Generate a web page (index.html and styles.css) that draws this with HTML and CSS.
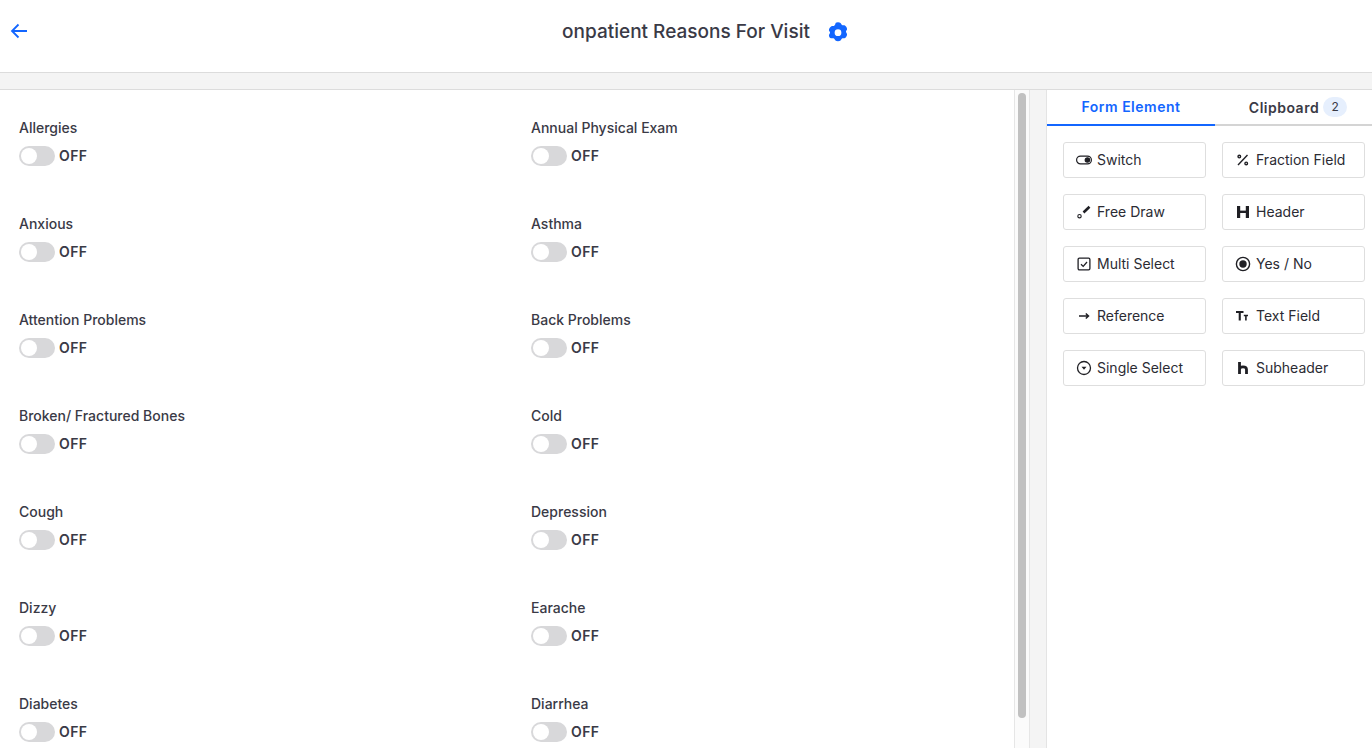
FILE: index.html
```html
<!DOCTYPE html>
<html lang="en">
<head>
    <meta charset="UTF-8">
    <meta name="viewport" content="width=device-width, initial-scale=1.0">
    <title>onpatient Reasons For Visit</title>
    <link rel="stylesheet" href="styles.css">
</head>
<body>
    <header class="topbar">
        <a class="back-link" href="#" aria-label="Back">
            <svg width="18" height="18" viewBox="0 0 18 18" fill="none" stroke="#1366ff" stroke-width="1.8"><path d="M17 9H2M8.500 2.500 2 9l6.500 6.500"/></svg>
        </a>
        <div class="title-wrap">
            <h1>onpatient Reasons For Visit</h1>
            <svg class="gear" width="20" height="21" viewBox="1 0 18 20"><path fill="#1366ff" fill-rule="evenodd" d="M7.600.9c1-.9 3.800-.9 4.800 0 .6.600.7 1.500 1.400 1.900.7.400 1.600.1 2.400.3 1.300.4 2.700 2.800 2.400 4.100-.2.800-1 1.300-1 2.100s.8 1.300 1 2.100c.3 1.300-1.100 3.700-2.400 4.100-.8.200-1.700-.1-2.400.3-.7.400-.8 1.300-1.400 1.900-1 .9-3.800.9-4.800 0-.6-.6-.7-1.500-1.400-1.900-.7-.4-1.600-.1-2.400-.3C2.500 16 1.100 13.600 1.400 12.300c.2-.8 1-1.300 1-2.100s-.8-1.300-1-2.100C1.100 6.800 2.500 4.400 3.800 4c.8-.2 1.700.1 2.400-.3.700-.4.800-1.300 1.400-1.900ZM10 7a3.200 3.200 0 1 0 0 6.400A3.200 3.200 0 0 0 10 7Z"/></svg>
        </div>
    </header>

    <div class="band"></div>

    <main class="workspace">
        <section class="form-panel">
            <div class="field-grid">
                <div class="field"><label>Allergies</label><div class="toggle-row"><span class="toggle"></span><span class="toggle-text">OFF</span></div></div>
                <div class="field"><label>Annual Physical Exam</label><div class="toggle-row"><span class="toggle"></span><span class="toggle-text">OFF</span></div></div>
                <div class="field"><label>Anxious</label><div class="toggle-row"><span class="toggle"></span><span class="toggle-text">OFF</span></div></div>
                <div class="field"><label>Asthma</label><div class="toggle-row"><span class="toggle"></span><span class="toggle-text">OFF</span></div></div>
                <div class="field"><label>Attention Problems</label><div class="toggle-row"><span class="toggle"></span><span class="toggle-text">OFF</span></div></div>
                <div class="field"><label>Back Problems</label><div class="toggle-row"><span class="toggle"></span><span class="toggle-text">OFF</span></div></div>
                <div class="field"><label>Broken/ Fractured Bones</label><div class="toggle-row"><span class="toggle"></span><span class="toggle-text">OFF</span></div></div>
                <div class="field"><label>Cold</label><div class="toggle-row"><span class="toggle"></span><span class="toggle-text">OFF</span></div></div>
                <div class="field"><label>Cough</label><div class="toggle-row"><span class="toggle"></span><span class="toggle-text">OFF</span></div></div>
                <div class="field"><label>Depression</label><div class="toggle-row"><span class="toggle"></span><span class="toggle-text">OFF</span></div></div>
                <div class="field"><label>Dizzy</label><div class="toggle-row"><span class="toggle"></span><span class="toggle-text">OFF</span></div></div>
                <div class="field"><label>Earache</label><div class="toggle-row"><span class="toggle"></span><span class="toggle-text">OFF</span></div></div>
                <div class="field"><label>Diabetes</label><div class="toggle-row"><span class="toggle"></span><span class="toggle-text">OFF</span></div></div>
                <div class="field"><label>Diarrhea</label><div class="toggle-row"><span class="toggle"></span><span class="toggle-text">OFF</span></div></div>
            </div>
        </section>

        <div class="scroll-track"><div class="scroll-thumb"></div></div>
        <div class="gutter"></div>

        <aside class="side-panel">
            <div class="tabs">
                <div class="tab tab-active">Form Element</div>
                <div class="tab">Clipboard <span class="badge">2</span></div>
            </div>
            <div class="element-grid">
                <button class="element"><span class="icon"><svg width="16" height="16" viewBox="0 0 16 16" fill="none" stroke="#1f1f24" stroke-width="1.200"><rect x=".6" y="4.100" width="14.800" height="7.800" rx="3.900"/><circle cx="11.400" cy="8" r="2.200" fill="#1f1f24"/></svg></span>Switch</button>
                <button class="element"><span class="icon"><svg width="16" height="16" viewBox="0 0 16 16" fill="none" stroke="#1f1f24" stroke-width="1.400"><path d="M12.500 3 3 13"/><circle cx="4.300" cy="4.600" r="1.300"/><circle cx="11.200" cy="11.400" r="1.300"/></svg></span>Fraction Field</button>
                <button class="element"><span class="icon"><svg width="16" height="16" viewBox="0 0 16 16" fill="none" stroke="#1f1f24"><path d="M7.500 8.500 13.500 2.800" stroke-width="2.600"/><circle cx="3.500" cy="12.200" r="1.700" stroke-width="1.100"/></svg></span>Free Draw</button>
                <button class="element"><span class="icon"><svg width="16" height="16" viewBox="0 0 16 16" fill="none" stroke="#1f1f24"><path d="M3.600 2v12M12.400 2v12" stroke-width="3.200"/><path d="M3 7.800h10" stroke-width="2.400"/></svg></span>Header</button>
                <button class="element"><span class="icon"><svg width="16" height="16" viewBox="0 0 16 16" fill="none" stroke="#1f1f24" stroke-width="1.300"><rect x="2.100" y="2.100" width="11.800" height="11.800" rx="1.300"/><path d="m5 8.200 2.200 2.200L11 6"/></svg></span>Multi Select</button>
                <button class="element"><span class="icon"><svg width="16" height="16" viewBox="0 0 16 16" fill="none" stroke="#1f1f24" stroke-width="1.400"><circle cx="8" cy="8" r="6.600"/><circle cx="8" cy="8" r="3.700" fill="#1f1f24" stroke="none"/></svg></span>Yes / No</button>
                <button class="element"><span class="icon"><svg width="16" height="16" viewBox="0 0 16 16" fill="none" stroke="#1f1f24" stroke-width="1.500"><path d="M3 8h9.500M9.800 5.500 12.500 8l-2.700 2.500"/></svg></span>Reference</button>
                <button class="element"><span class="icon"><svg width="16" height="16" viewBox="0 0 16 16" fill="none" stroke="#1f1f24"><path d="M1 4h7.500M4.750 4v8.500" stroke-width="2.100"/><path d="M8.800 7.500H13M10.900 7.500v5" stroke-width="1.600"/></svg></span>Text Field</button>
                <button class="element"><span class="icon"><svg width="16" height="16" viewBox="0 0 16 16" fill="none" stroke="#1f1f24" stroke-width="1.300"><circle cx="8" cy="8" r="6.500"/><path d="M5.500 6.800h5L8 9.800Z" fill="#1f1f24" stroke="none"/></svg></span>Single Select</button>
                <button class="element"><span class="icon"><svg width="16" height="16" viewBox="0 0 16 16" fill="none" stroke="#1f1f24" stroke-width="2.800"><path d="M4.500 2v12M4.500 9.500c0-3.500 7-3.500 7 0V14"/></svg></span>Subheader</button>
            </div>
        </aside>
    </main>
</body>
</html>
```

FILE: styles.css
```css
* {
    box-sizing: border-box;
}
html, body {
    height: 100%;
}
body {
    margin: 0;
    display: flex;
    flex-direction: column;
    height: 748px;
    overflow: hidden;
    background: #fff;
    color: #3a3a46;
    font-family: Inter, "Liberation Sans", sans-serif;
}
.topbar {
    flex: none;
    height: 73px;
    display: flex;
    align-items: center;
    justify-content: center;
    padding-bottom: 8px;
    position: relative;
    border-bottom: 1px solid #dcdcdc;
}
.back-link {
    position: absolute;
    left: 10px;
    top: 22px;
    display: block;
    height: 18px;
}
.title-wrap {
    display: flex;
    align-items: center;
    gap: 18px;
    padding-left: 38px;
}
.title-wrap h1 {
    margin: 0;
    font-size: 19px;
    font-weight: 500;
    line-height: 24px;
    color: #3a3a46;
}
.gear {
    display: block;
}
.band {
    flex: none;
    height: 17px;
    background: #f4f4f4;
    border-bottom: 1px solid #dcdcdc;
}
.workspace {
    flex: 1;
    display: flex;
    min-height: 0;
}
.form-panel {
    width: 1014px;
    flex: none;
    padding: 28px 19px 0;
    overflow: hidden;
}
.field-grid {
    display: grid;
    grid-template-columns: 512px 1fr;
    grid-auto-rows: 96px;
}
.field label {
    display: block;
    font-size: 14px;
    font-weight: 500;
    line-height: 20px;
    color: #3a3a46;
}
.toggle-row {
    display: flex;
    align-items: center;
    gap: 4px;
    margin-top: 8px;
}
.toggle {
    width: 36px;
    height: 20px;
    border-radius: 10px;
    background: #d8d8da;
    position: relative;
}
.toggle::after {
    content: "";
    position: absolute;
    left: 2px;
    top: 2px;
    width: 16px;
    height: 16px;
    border-radius: 50%;
    background: #fff;
}
.toggle-text {
    font-size: 14px;
    font-weight: 600;
    letter-spacing: .4px;
    line-height: 20px;
    color: #3a3a46;
}
.scroll-track {
    width: 16px;
    flex: none;
    padding: 3px 3px 0 3px;
    background: #fbfbfb;
    border-left: 1px solid #e6e6e6;
    border-right: 1px solid #e6e6e6;
}
.scroll-thumb {
    height: 625px;
    border-radius: 5px;
    background: #c1c1c1;
}
.gutter {
    width: 16px;
    flex: none;
    background: #f4f4f4;
}
.side-panel {
    flex: 1;
    min-width: 0;
    overflow: hidden;
    border-left: 1px solid #e4e4e4;
}
.tabs {
    display: flex;
    height: 36px;
    border-bottom: 2px solid #d4d4d4;
}
.tab {
    display: flex;
    align-items: center;
    justify-content: center;
    gap: 4px;
    flex: none;
    height: 36px;
    width: 166px;
    padding-bottom: 2px;
    font-size: 14px;
    font-weight: 600;
    letter-spacing: .5px;
    color: #3a3a46;
}
.tab-active {
    width: 168px;
    color: #1366ff;
    border-bottom: 2px solid #1366ff;
}
.badge {
    width: 24px;
    height: 20px;
    border-radius: 10px;
    background: #e6effd;
    text-align: center;
    font-size: 12px;
    font-weight: 400;
    letter-spacing: 0;
    line-height: 20px;
}
.element-grid {
    display: grid;
    grid-template-columns: 143px 143px;
    grid-auto-rows: 36px;
    gap: 16px;
    padding: 16px 0 0 16px;
}
.element {
    display: flex;
    align-items: center;
    gap: 5px;
    padding: 0 12px 2px;
    border: 1px solid #dedede;
    border-radius: 3px;
    background: #fff;
    font-family: inherit;
    font-size: 14px;
    color: #2b2b33;
}
.icon {
    width: 16px;
    height: 16px;
    flex: none;
    margin-top: 2px;
}
.icon svg {
    display: block;
}
```
